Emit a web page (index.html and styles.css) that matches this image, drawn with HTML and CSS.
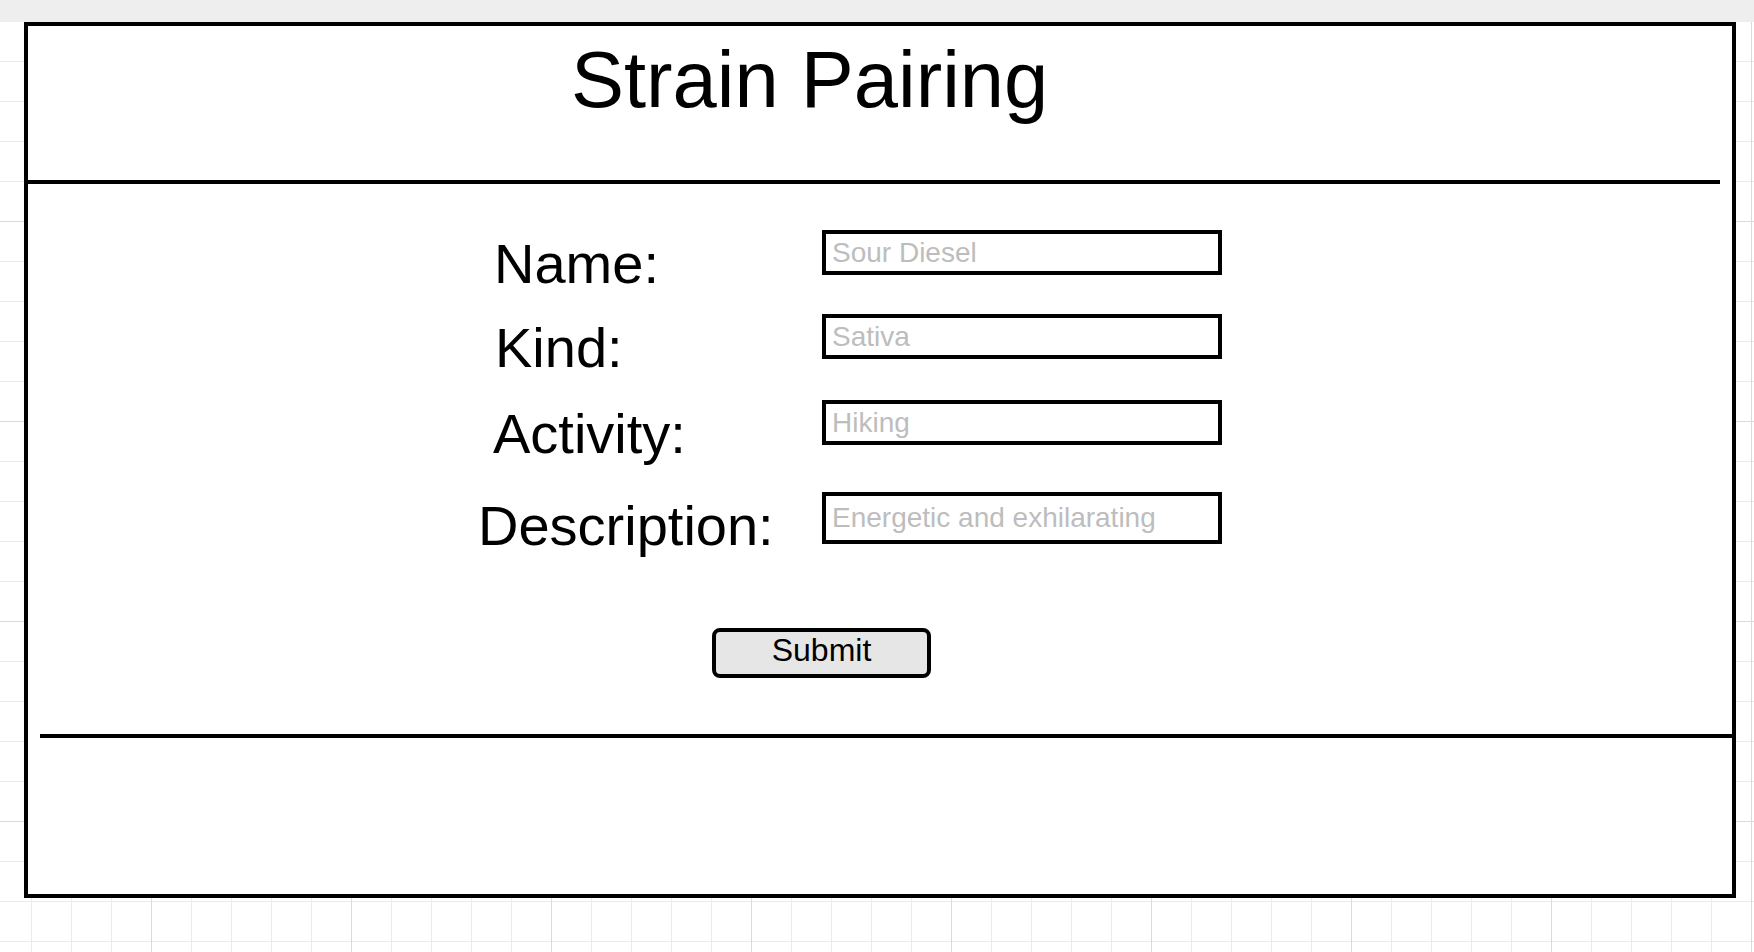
FILE: index.html
```html
<!DOCTYPE html>
<html lang="en">
<head>
<meta charset="utf-8">
<title>Strain Pairing</title>
<link rel="stylesheet" href="styles.css">
</head>
<body>
<div class="topbar"></div>
<div class="frame">
  <header class="header">
    <h1 class="title">Strain Pairing</h1>
  </header>
  <div class="rule rule-top"></div>
  <form class="form">
    <div class="row">
      <label class="label" for="f-name">Name:</label>
      <input class="field" id="f-name" type="text" placeholder="Sour Diesel">
    </div>
    <div class="row row-kind">
      <label class="label label-kind" for="f-kind">Kind:</label>
      <input class="field" id="f-kind" type="text" placeholder="Sativa">
    </div>
    <div class="row row-activity">
      <label class="label label-activity" for="f-activity">Activity:</label>
      <input class="field" id="f-activity" type="text" placeholder="Hiking">
    </div>
    <div class="row row-desc">
      <label class="label label-desc" for="f-desc">Description:</label>
      <input class="field field-tall" id="f-desc" type="text" placeholder="Energetic and exhilarating">
    </div>
    <button class="submit" type="button">Submit</button>
  </form>
  <div class="rule rule-bottom"></div>
  <footer class="footer"></footer>
</div>
</body>
</html>
```
FILE: styles.css
```css
html, body {
  margin: 0;
  padding: 0;
}

body {
  width: 1754px;
  height: 952px;
  overflow: hidden;
  font-family: "Liberation Sans", Arial, sans-serif;
  color: #000;
  background-color: #ffffff;
  background-image:
    linear-gradient(to right, #dadada 1px, transparent 1px),
    linear-gradient(to bottom, #dadada 1px, transparent 1px),
    linear-gradient(to right, #ebebeb 1px, transparent 1px),
    linear-gradient(to bottom, #ebebeb 1px, transparent 1px);
  background-size: 200px 200px, 200px 200px, 40px 40px, 40px 40px;
  background-position: 151px 221px, 151px 221px, 31px 21px, 31px 21px;
}

.topbar {
  height: 22px;
  background: #eeeeee;
}

.frame {
  box-sizing: border-box;
  width: 1712px;
  height: 876px;
  margin-left: 24px;
  border: 4px solid #000;
  background: #fff;
  display: flex;
  flex-direction: column;
}

.header {
  flex: none;
  height: 154px;
  box-sizing: border-box;
  padding-top: 15px;
  padding-left: 543px;
}

.title {
  margin: 0;
  font-size: 79.5px;
  line-height: 78px;
  font-weight: normal;
  white-space: nowrap;
}

.rule {
  flex: none;
  height: 4px;
  background: #000;
}

.rule-top {
  width: 1692px;
}

.rule-bottom {
  width: 1692px;
  margin-left: 12px;
}

.form {
  flex: none;
  height: 550px;
  box-sizing: border-box;
  padding-top: 46px;
  margin: 0;
  display: flex;
  flex-direction: column;
  align-items: flex-start;
}

.row {
  display: grid;
  grid-template-columns: 328px 400px;
  align-items: start;
  padding-left: 466px;
}

.row-kind {
  margin-top: 39px;
}

.row-activity {
  margin-top: 41px;
}

.row-desc {
  margin-top: 47px;
}

.label {
  font-size: 56px;
  line-height: 45px;
  margin-top: 11px;
  margin-bottom: -11px;
  white-space: nowrap;
}

.label-kind {
  margin-left: 1px;
}

.label-activity {
  margin-left: -1px;
}

.label-desc {
  margin-left: -16px;
}

.field {
  box-sizing: border-box;
  width: 400px;
  height: 45px;
  margin: 0;
  border: 4px solid #000;
  border-radius: 0;
  padding: 0 5px 0 6px;
  background: #fff;
  font-family: "Liberation Sans", Arial, sans-serif;
  font-size: 28px;
  color: #000;
  outline: none;
}

.field-tall {
  height: 52px;
}

.field::placeholder {
  color: #bdbdbd;
  opacity: 1;
}

.submit {
  box-sizing: border-box;
  width: 219px;
  height: 50px;
  margin-top: 84px;
  margin-left: 684px;
  padding: 0 0 6px;
  border: 4px solid #000;
  border-radius: 8px;
  background: #e6e6e6;
  font-family: "Liberation Sans", Arial, sans-serif;
  font-size: 32px;
  line-height: 1;
  color: #000;
}

.footer {
  flex: 1;
}
```
